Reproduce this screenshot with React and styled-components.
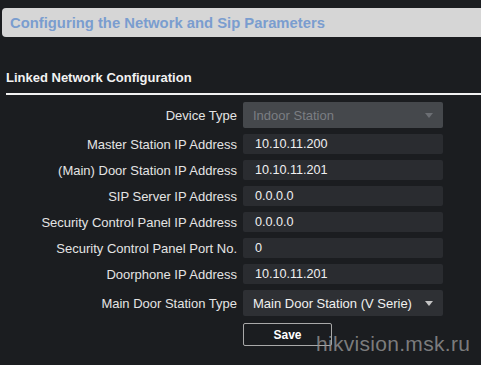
import styled, { createGlobalStyle } from "styled-components";

const GlobalStyle = createGlobalStyle`
  html, body {
    margin: 0;
    padding: 0;
    background: #1b1d20;
  }
  body {
    width: 481px;
    height: 365px;
    overflow: hidden;
    font-family: "Liberation Sans", Arial, sans-serif;
  }
`;

const Page = styled.div`
  position: relative;
  width: 481px;
  height: 365px;
  padding-top: 8px;
  box-sizing: border-box;
`;

const Banner = styled.div`
  margin-left: 2px;
  height: 29px;
  display: flex;
  align-items: center;
  padding-left: 8px;
  background: #d6d6d6;
  border-radius: 4px 0 0 4px;
  color: #7a9dcf;
  font-weight: bold;
  font-size: 14.8px;
`;

const SectionTitle = styled.div`
  margin: 0 0 0 6px;
  padding: 32px 0 7px 0;
  border-bottom: 2px solid #f2f2f2;
  color: #f2f2f2;
  font-weight: bold;
  font-size: 13px;
  line-height: 17px;
`;

const Form = styled.div`
  display: grid;
  grid-template-columns: 237px 200px;
  column-gap: 6px;
  row-gap: 6px;
  align-items: center;
  margin-top: 7px;
`;

const Label = styled.div`
  text-align: right;
  color: #e4e4e4;
  font-size: 13px;
  white-space: nowrap;
`;

const Input = styled.div`
  height: ${(p) => (p.$tall ? 26 : 20)}px;
  display: flex;
  align-items: center;
  justify-content: space-between;
  padding-left: ${(p) => (p.$tall ? 10 : 12)}px;
  padding-right: 10px;
  box-sizing: border-box;
  border-radius: 2px;
  background: ${(p) => (p.$disabled ? "#45484c" : p.$tall ? "#2e3034" : "#2a2c30")};
  color: ${(p) => (p.$disabled ? "#7b7e83" : "#f0f0f0")};
  font-size: ${(p) => (p.$tall ? 13 : 12.6)}px;
`;

const Arrow = styled.span`
  width: 0;
  height: 0;
  border-left: 4px solid transparent;
  border-right: 4px solid transparent;
  border-top: 5px solid ${(p) => (p.$disabled ? "#6c6f74" : "#c4c4c4")};
`;

const SaveButton = styled.button`
  grid-column: 2;
  width: 89px;
  height: 23px;
  margin-top: 1px;
  border: 1px solid #a9a9a9;
  border-radius: 2px;
  background: transparent;
  color: #ffffff;
  font-family: "Liberation Sans", Arial, sans-serif;
  font-weight: bold;
  font-size: 12px;
  padding: 0;
`;

const Watermark = styled.div`
  position: absolute;
  left: 316px;
  top: 332px;
  color: rgba(150, 150, 150, 0.8);
  font-family: "Liberation Sans", Arial, sans-serif;
  font-size: 21px;
  letter-spacing: 0.3px;
`;

const rows = [
  { label: "Device Type", value: "Indoor Station", select: true, disabled: true },
  { label: "Master Station IP Address", value: "10.10.11.200" },
  { label: "(Main) Door Station IP Address", value: "10.10.11.201" },
  { label: "SIP Server IP Address", value: "0.0.0.0" },
  { label: "Security Control Panel IP Address", value: "0.0.0.0" },
  { label: "Security Control Panel Port No.", value: "0" },
  { label: "Doorphone IP Address", value: "10.10.11.201" },
  { label: "Main Door Station Type", value: "Main Door Station (V Serie)", select: true },
];

export default function App() {
  return (
    <>
      <GlobalStyle />
      <Page>
        <Banner>Configuring the Network and Sip Parameters</Banner>
        <SectionTitle>Linked Network Configuration</SectionTitle>
        <Form>
          {rows.map((r) => [
            <Label key={r.label + "-l"}>{r.label}</Label>,
            <Input key={r.label + "-v"} $tall={r.select} $disabled={r.disabled}>
              <span>{r.value}</span>
              {r.select && <Arrow $disabled={r.disabled} />}
            </Input>,
          ])}
          <SaveButton>Save</SaveButton>
        </Form>
        <Watermark>hikvision.msk.ru</Watermark>
      </Page>
    </>
  );
}
